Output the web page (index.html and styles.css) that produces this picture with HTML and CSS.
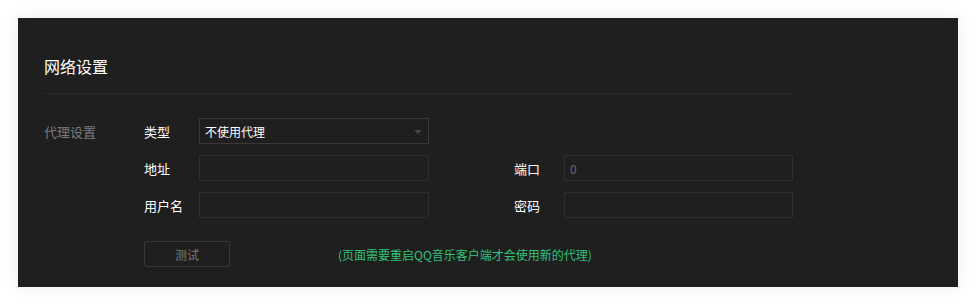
FILE: index.html
```html
<!DOCTYPE html>
<html>
<head>
<meta charset="utf-8">
<title>网络设置</title>
<link rel="stylesheet" href="styles.css">
</head>
<body>
<div class="panel">
  <h2 class="panel-title">网络设置</h2>
  <div class="proxy-form">
    <span class="group-label">代理设置</span>
    <span class="field-label">类型</span>
    <div class="select">
      <span>不使用代理</span>
      <i class="select-arrow"></i>
    </div>
    <span class="empty"></span>
    <span class="empty"></span>
    <span class="empty"></span>

    <span class="empty"></span>
    <span class="field-label">地址</span>
    <div class="input"></div>
    <span class="empty"></span>
    <span class="field-label">端口</span>
    <div class="input"><span class="placeholder">0</span></div>

    <span class="empty"></span>
    <span class="field-label">用户名</span>
    <div class="input"></div>
    <span class="empty"></span>
    <span class="field-label">密码</span>
    <div class="input"></div>
  </div>
  <div class="actions">
    <button class="btn-test">测试</button>
    <span class="tip">(页面需要重启QQ音乐客户端才会使用新的代理)</span>
  </div>
</div>
</body>
</html>
```

FILE: styles.css
```css
/* QQ music settings - network panel */

body
{ margin: 0;
  background: #fff;
  font-family: "Noto Sans CJK SC", "Microsoft YaHei", sans-serif;
}

div.panel
{ margin: 18px;
  width: 940px;
  height: 269px;
  box-sizing: border-box;
  padding: 35px 0 0 26px;
  background: #1f1f1f;
  box-shadow: 0 0 18px rgba(0, 0, 0, 0.08);
}

h2.panel-title
{ margin: 0;
  width: 749px;
  height: 41px;
  box-sizing: border-box;
  padding-top: 1px;
  border-bottom: 1px solid #2c2c2c;
  font-size: 16px;
  font-weight: normal;
  line-height: 24px;
  color: #fff;
}

div.proxy-form
{ display: grid;
  grid-template-columns: 100px 55px 230px 85px 50px 229px;
  grid-auto-rows: 26px;
  row-gap: 11px;
  margin-top: 24px;
  font-size: 13px;
}

span.group-label,
span.field-label
{ line-height: 27px;
  color: #fff;
}

span.group-label
{ color: #7a7a7a;
}

div.select,
div.input
{ position: relative;
  box-sizing: border-box;
  border: 1px solid #2e2e2e;
  padding: 0 5px;
  font-size: 12px;
  line-height: 25px;
  color: #fff;
}

div.select
{ border-color: #3a3a3a;
}

i.select-arrow
{ position: absolute;
  right: 6px;
  top: 11px;
  width: 0;
  height: 0;
  border-left: 4px solid transparent;
  border-right: 4px solid transparent;
  border-top: 4px solid #464646;
}

span.placeholder
{ color: #6a6a6a;
}

div.actions
{ display: flex;
  align-items: center;
  margin-top: 23px;
  margin-left: 100px;
}

button.btn-test
{ width: 86px;
  height: 26px;
  padding: 0;
  border: 1px solid #383838;
  border-radius: 2px;
  background: transparent;
  font-family: inherit;
  font-size: 12px;
  color: #7a7a7a;
}

span.tip
{ margin-left: 108px;
  font-size: 12px;
  color: #31c27c;
}
```
